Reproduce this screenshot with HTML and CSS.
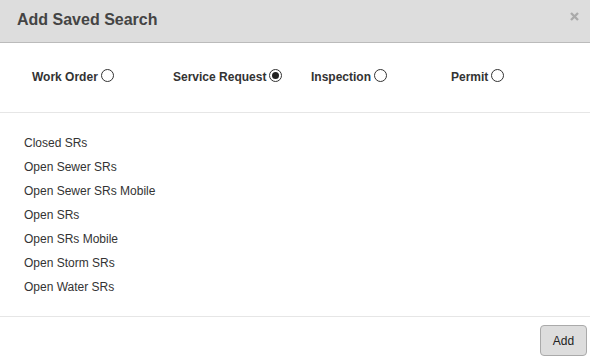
FILE: index.html
```html
<!DOCTYPE html>
<html lang="en">
<head>
    <meta charset="UTF-8">
    <title>Add Saved Search</title>
    <link rel="stylesheet" href="styles.css">
</head>
<body>
    <div class="modal">
        <div class="modal-header">
            <h3>Add Saved Search</h3>
            <span class="close">
                <svg width="9" height="9" viewBox="0 0 9 9"><path d="M1 1L8 8M8 1L1 8" stroke="#aaa" stroke-width="2.4" /></svg>
            </span>
        </div>

        <div class="types">
            <label class="type">Work Order<span class="radio"></span></label>
            <label class="type">Service Request<span class="radio checked"></span></label>
            <label class="type">Inspection<span class="radio"></span></label>
            <label class="type">Permit<span class="radio"></span></label>
        </div>

        <ul class="searches">
            <li>Closed SRs</li>
            <li>Open Sewer SRs</li>
            <li>Open Sewer SRs Mobile</li>
            <li>Open SRs</li>
            <li>Open SRs Mobile</li>
            <li>Open Storm SRs</li>
            <li>Open Water SRs</li>
        </ul>

        <div class="modal-footer">
            <button class="btn">Add</button>
        </div>
    </div>
</body>
</html>
```

FILE: styles.css
```css
body {
    margin: 0;
    font-family: "Liberation Sans", Arial, sans-serif;
    color: #333;
    background-color: #fff;
}
.modal {
    width: 590px;
}
.modal-header {
    height: 42px;
    background-color: #ddd;
    border-bottom: 1px solid #bbb;
    display: flex;
    align-items: center;
    justify-content: space-between;
    padding: 0 11px 0 17px;
}
.modal-header h3 {
    margin: 0;
    font-size: 16px;
    font-weight: bold;
    color: #444;
    padding-bottom: 3px;
}
.close {
    display: flex;
    margin-bottom: 10px;
}
.types {
    display: grid;
    grid-template-columns: 141px 138px 140px 140px;
    padding: 0 0 0 32px;
    height: 69px;
    align-items: center;
    border-bottom: 1px solid #e6e6e6;
}
.type {
    font-size: 12px;
    font-weight: bold;
    display: flex;
    align-items: center;
    margin-bottom: 1px;
}
.radio {
    width: 11px;
    height: 11px;
    border: 1px solid #333;
    border-radius: 50%;
    margin-left: 3px;
    margin-top: -4px;
    display: flex;
    align-items: center;
    justify-content: center;
}
.radio.checked::after {
    content: "";
    width: 7px;
    height: 7px;
    border-radius: 50%;
    background-color: #222;
}
.searches {
    list-style: none;
    margin: 0;
    padding: 18px 24px 17px;
    font-size: 12px;
    line-height: 24px;
    border-bottom: 1px solid #e6e6e6;
}
.modal-footer {
    display: flex;
    justify-content: flex-end;
    padding: 8px 3px 0 0;
}
.btn {
    width: 47px;
    height: 31px;
    background-color: #ddd;
    border: 1px solid #aaa;
    border-radius: 4px;
    font-family: "Liberation Sans", Arial, sans-serif;
    font-size: 12px;
    color: #222;
}
```
